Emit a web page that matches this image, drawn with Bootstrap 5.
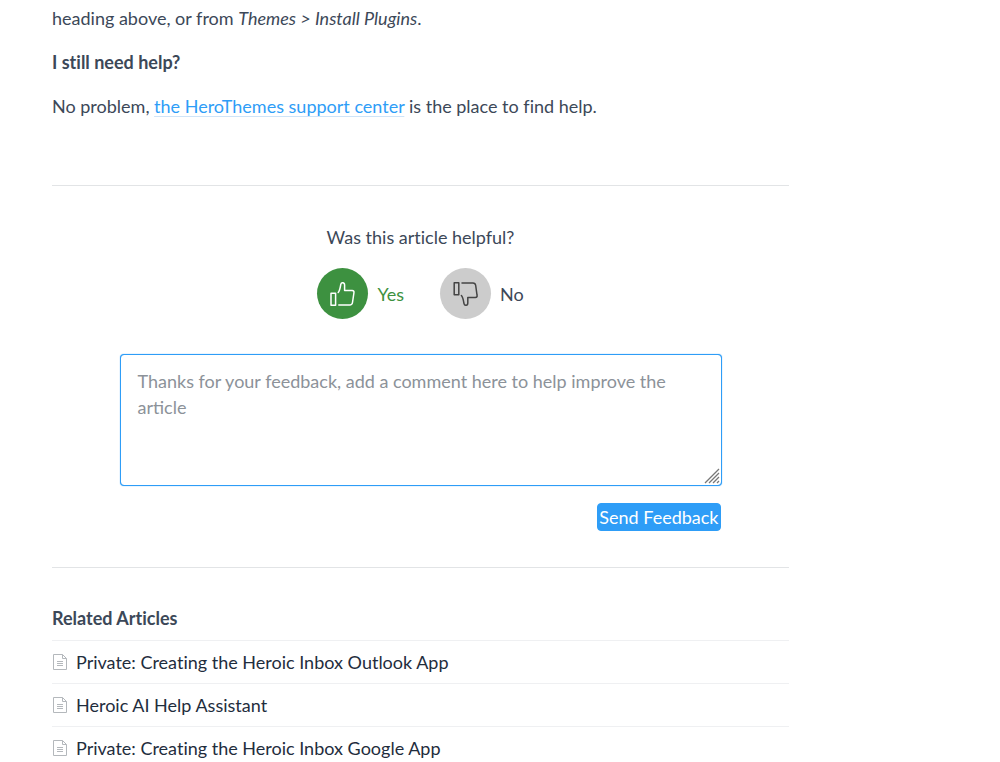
<!DOCTYPE html>
<html lang="en">
<head>
<meta charset="utf-8">
<meta name="viewport" content="width=device-width, initial-scale=1">
<title>Help article</title>
<link href="https://cdn.jsdelivr.net/npm/bootstrap@5.3.0/dist/css/bootstrap.min.css" rel="stylesheet">
<style>
  body { font-family: Lato, "Open Sans", sans-serif; font-size: 18px; line-height: 26px; font-variant-ligatures: none; color: #3c4858; background: #fff; }
  .article-column { max-width: 789px; padding: 5px 0 0 52px; }
  .article-body p { margin-bottom: 18px; }
  .article-body h2, .related h2 { font-size: 18px; line-height: 26px; font-weight: 700; color: #3c4858; }
  .article-body h2 { margin-bottom: 18px; }
  .article-body a { color: #2e9df7; text-decoration: underline 1px #cfe4f8; text-underline-offset: 3px; text-decoration-skip-ink: none; }
  .article-body { padding-bottom: 48px; }
  .feedback { border: solid #e2e4e6; border-width: 1px 0; padding: 38px 0 36px; }
  .votes { gap: 36px; margin: 18px 0 35px; }
  .vote { gap: 9px; color: inherit; }
  .vote-yes { color: #3d9140; }
  .disc { width: 51px; height: 51px; background: #ccc; color: #444; }
  .vote-yes .disc { background: #3d9140; color: #fff; }
  .comment-form { max-width: 602px; }
  .comment-form textarea { height: 132px; padding: 13px 17px; font-size: 18px; line-height: 26px; border: 1px solid #2e9df7; border-radius: 4px; box-shadow: 0 0 1px #2e9df7; resize: vertical; }
  .comment-form textarea::placeholder { color: #8c9299; }
  .comment-form textarea::-webkit-resizer { display: none; }
  .grip { right: 2px; bottom: 2px; pointer-events: none; }
  .send { margin-top: 17px; margin-right: 1px; padding: 0 1px; line-height: 26px; font-size: 18px; border-radius: 4px; background: #2e9df7; border-color: #2e9df7; }
  .related { padding-top: 37px; }
  .related h2 { margin-bottom: 9px; }
  .related li { border-top: 1px solid #eff0f2; padding: 8px 0; }
  .related li:last-child { padding-bottom: 0; }
  .related a { gap: 9px; padding-left: 1px; color: #1f2d3d; }
</style>
</head>
<body>
<main class="article-column">
  <section class="article-body">
    <p>heading above, or from <em>Themes &gt; Install Plugins</em>.</p>
    <h2>I still need help?</h2>
    <p>No problem, <a href="#">the HeroThemes support center</a> is the place to find help.</p>
  </section>

  <section class="feedback">
    <div class="text-center">Was this article helpful?</div>
    <div class="votes d-flex justify-content-center">
      <button type="button" class="vote vote-yes d-flex align-items-center border-0 bg-transparent p-0">
        <span class="disc rounded-circle d-flex align-items-center justify-content-center">
          <svg width="26" height="26" viewBox="0 0 26 26" fill="none" stroke="currentColor" stroke-width="1.5" stroke-linejoin="round" stroke-linecap="round" aria-hidden="true"><path d="M1 12.200h4.600v12H1z M8.200 11.500C9.800 9.800 10.300 6.400 10.800 3.300C11.200 1 14.600 1 14.600 4V9.600H22.100C23.800 9.600 24.200 10.500 23.900 12L22.500 21.500C22.200 23.300 21.500 24 19.800 24H8.800"/></svg>
        </span>
        <span>Yes</span>
      </button>
      <button type="button" class="vote d-flex align-items-center border-0 bg-transparent p-0">
        <span class="disc rounded-circle d-flex align-items-center justify-content-center">
          <svg width="26" height="26" viewBox="0 0 26 26" fill="none" stroke="currentColor" stroke-width="1.5" stroke-linejoin="round" stroke-linecap="round" aria-hidden="true"><path d="M2.200 1.800h4.600v12H2.200z M10 2H21C22.700 2 23.400 2.700 23.700 4.500L25 14C25.300 15.500 25 16.400 23.300 16.400H15.800V22C15.800 25 12.400 25 12 22.700C11.500 19.600 11 16.200 9.400 14.500"/></svg>
        </span>
        <span>No</span>
      </button>
    </div>
    <form class="comment-form mx-auto d-flex flex-column">
      <div class="position-relative">
        <textarea class="form-control d-block" aria-label="Feedback comment" placeholder="Thanks for your feedback, add a comment here to help improve the article"></textarea>
        <svg class="grip position-absolute" width="16" height="16" viewBox="0 0 16 16" stroke="#777" stroke-width="1.300" aria-hidden="true"><path d="M1 15L15 1M5 15L15 5M9 15L15 9M13 15L15 13"/></svg>
      </div>
      <button type="button" class="send btn btn-primary align-self-end">Send Feedback</button>
    </form>
  </section>

  <section class="related">
    <h2>Related Articles</h2>
    <ul class="list-unstyled mb-0">
      <li><a href="#" class="d-flex align-items-center text-decoration-none"><svg width="14" height="16" viewBox="0 0 14 16" fill="none" stroke="#b4b8bc" aria-hidden="true"><path d="M.5.5H9.500L13.500 4.500V15.500H.5zM9.500.5V4.500H13.500M4 7.500H10M4 9.500H10M4 11.500H10"/></svg><span>Private: Creating the Heroic Inbox Outlook App</span></a></li>
      <li><a href="#" class="d-flex align-items-center text-decoration-none"><svg width="14" height="16" viewBox="0 0 14 16" fill="none" stroke="#b4b8bc" aria-hidden="true"><path d="M.5.5H9.500L13.500 4.500V15.500H.5zM9.500.5V4.500H13.500M4 7.500H10M4 9.500H10M4 11.500H10"/></svg><span>Heroic AI Help Assistant</span></a></li>
      <li><a href="#" class="d-flex align-items-center text-decoration-none"><svg width="14" height="16" viewBox="0 0 14 16" fill="none" stroke="#b4b8bc" aria-hidden="true"><path d="M.5.5H9.500L13.500 4.500V15.500H.5zM9.500.5V4.500H13.500M4 7.500H10M4 9.500H10M4 11.500H10"/></svg><span>Private: Creating the Heroic Inbox Google App</span></a></li>
    </ul>
  </section>
</main>
<script src="https://cdn.jsdelivr.net/npm/bootstrap@5.3.0/dist/js/bootstrap.bundle.min.js"></script>
</body>
</html>
